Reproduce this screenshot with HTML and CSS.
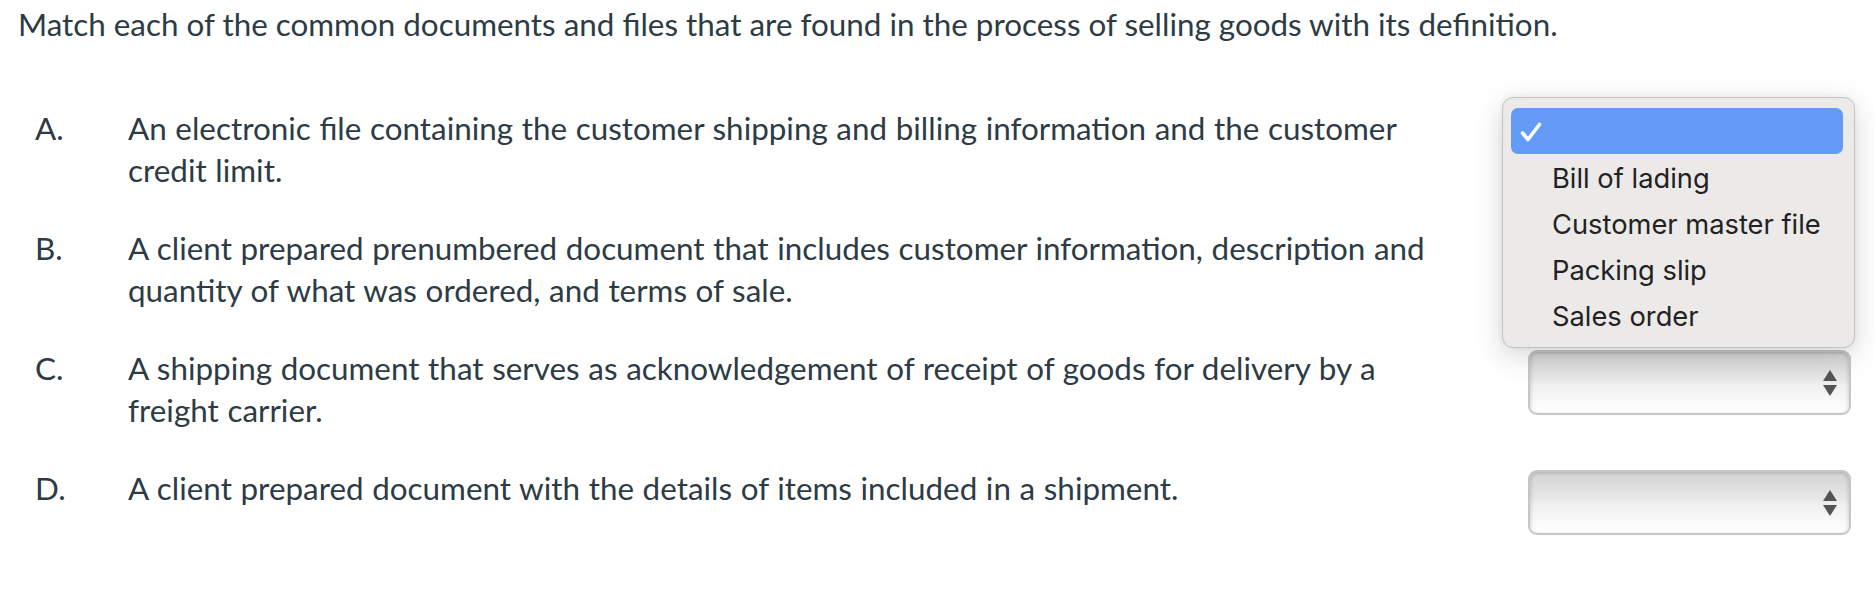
FILE: index.html
```html
<!DOCTYPE html>
<html>
<head>
<meta charset="utf-8">
<link rel="stylesheet" href="styles.css">
</head>
<body>
<div class="page">
  <p class="question">Match each of the common documents and files that are found in the process of selling goods with its definition.</p>
  <div class="items">
    <div class="item">
      <div class="letter">A.</div>
      <div class="text">An electronic file containing the customer shipping and billing information and the customer credit limit.</div>
      <div class="answer">
        <div class="select"><span class="arrows"><span class="up"></span><span class="down"></span></span></div>
        <div class="menu">
          <div class="opt selected"><svg class="check" width="22" height="22" viewBox="0 0 22 22"><path d="M2.5 12 L8 18.5 L19.5 3.5" fill="none" stroke="#fff" stroke-width="3.6" stroke-linecap="round" stroke-linejoin="round"/></svg></div>
          <div class="opt">Bill of lading</div>
          <div class="opt">Customer master file</div>
          <div class="opt">Packing slip</div>
          <div class="opt">Sales order</div>
        </div>
      </div>
    </div>
    <div class="item">
      <div class="letter">B.</div>
      <div class="text">A client prepared prenumbered document that includes customer information, description and quantity of what was ordered, and terms of sale.</div>
      <div class="answer">
        <div class="select"><span class="arrows"><span class="up"></span><span class="down"></span></span></div>
      </div>
    </div>
    <div class="item">
      <div class="letter">C.</div>
      <div class="text">A shipping document that serves as acknowledgement of receipt of goods for delivery by a freight carrier.</div>
      <div class="answer">
        <div class="select"><span class="arrows"><span class="up"></span><span class="down"></span></span></div>
      </div>
    </div>
    <div class="item">
      <div class="letter">D.</div>
      <div class="text">A client prepared document with the details of items included in a shipment.</div>
      <div class="answer">
        <div class="select"><span class="arrows"><span class="up"></span><span class="down"></span></span></div>
      </div>
    </div>
  </div>
</div>
</body>
</html>
```
FILE: styles.css
```css
html, body {
  margin: 0;
  padding: 0;
  background: #fff;
}
.page {
  padding: 3px 23px 0 18px;
  font-family: Lato, "Liberation Sans", sans-serif;
  font-size: 31.4px;
  line-height: 42px;
  color: #2d3b45;
}
.question {
  margin: 0 0 62px 0;
}
.items {
  display: flex;
  flex-direction: column;
  gap: 36px;
}
.item {
  display: flex;
  align-items: flex-start;
  min-height: 84px;
}
.letter {
  width: 93px;
  padding-left: 17px;
  flex: none;
}
.text {
  width: 1320px;
  flex: none;
  word-spacing: 0.6px;
}
.answer {
  margin-left: auto;
  position: relative;
  width: 323px;
  padding-top: 3px;
}
.select {
  position: relative;
  height: 61px;
  border: 2px solid #c6c6c6;
  border-radius: 9px;
  background: linear-gradient(to bottom, #d4d4d4 0%, #e8e8e8 45%, #f1f1f1 55%, #ffffff 100%);
  box-shadow: inset 0 2px 3px rgba(0,0,0,0.10), inset 3px 0 3px rgba(0,0,0,0.05), inset -3px 0 3px rgba(0,0,0,0.05);
}
.arrows {
  position: absolute;
  right: 12px;
  top: 18px;
  display: flex;
  flex-direction: column;
  gap: 4px;
}
.up {
  width: 0;
  height: 0;
  border-left: 7px solid transparent;
  border-right: 7px solid transparent;
  border-bottom: 11px solid #545454;
}
.down {
  width: 0;
  height: 0;
  border-left: 7px solid transparent;
  border-right: 7px solid transparent;
  border-top: 11px solid #545454;
}
.menu {
  position: absolute;
  left: -26px;
  top: -10px;
  width: 332px;
  padding: 10px 11px 9px 8px;
  background: #ebeae9;
  border: 1px solid #c3c3c3;
  border-radius: 11px;
  box-shadow: 0 8px 30px rgba(0,0,0,0.16), 0 0 6px rgba(0,0,0,0.06);
  font-family: Inter, "Liberation Sans", sans-serif;
  font-size: 27.3px;
  line-height: 50px;
  color: #222222;
  z-index: 2;
}
.opt {
  height: 46px;
  padding-left: 41px;
  position: relative;
}
.opt.selected {
  background: #639bf6;
  border-radius: 7px;
}
.check {
  position: absolute;
  left: 9px;
  top: 13px;
}
```
